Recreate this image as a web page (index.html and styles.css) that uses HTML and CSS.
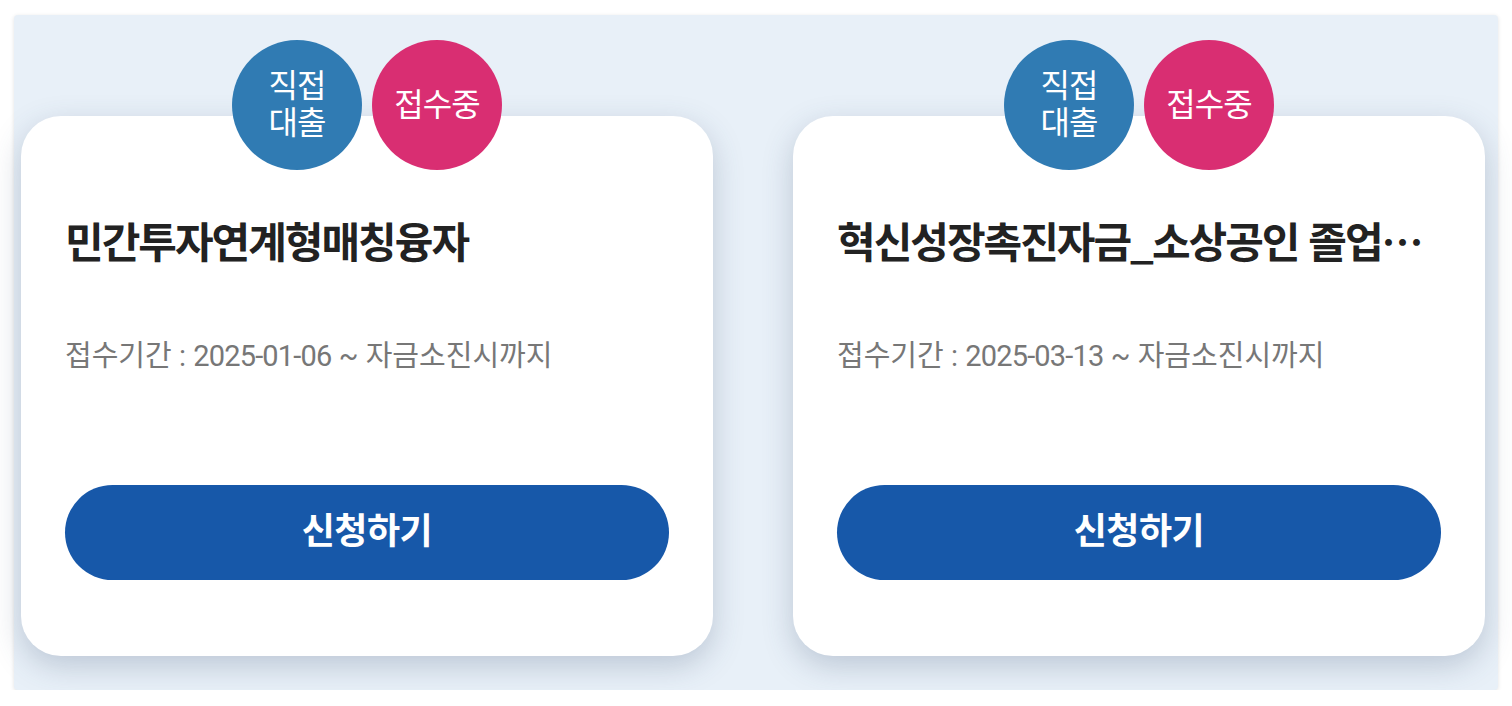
FILE: index.html
```html
<!DOCTYPE html>
<html lang="ko">
<head>
    <meta charset="UTF-8">
    <meta name="viewport" content="width=device-width, initial-scale=1.0">
    <title>정책자금 목록</title>
    <link rel="stylesheet" href="styles.css">
</head>
<body>
    <div class="panel">
        <div class="card-list">

            <div class="card">
                <div class="badges">
                    <span class="badge badge-type">직접<br>대출</span>
                    <span class="badge badge-status">접수중</span>
                </div>
                <div class="card-title">민간투자연계형매칭융자</div>
                <div class="card-period">접수기간 : <span class="date">2025-01-06</span> ~ 자금소진시까지</div>
                <a href="#" class="btn-apply">신청하기</a>
            </div>

            <div class="card">
                <div class="badges">
                    <span class="badge badge-type">직접<br>대출</span>
                    <span class="badge badge-status">접수중</span>
                </div>
                <div class="card-title">혁신성장촉진자금_소상공인 졸업기업 전용자금</div>
                <div class="card-period">접수기간 : <span class="date">2025-03-13</span> ~ 자금소진시까지</div>
                <a href="#" class="btn-apply">신청하기</a>
            </div>

        </div>
    </div>
</body>
</html>
```

FILE: styles.css
```css
body {
    font-family: Roboto, "Noto Sans CJK KR", sans-serif;
    margin: 0;
    padding: 0;
    background: #ffffff;
    color: #222222;
}

.panel {
    margin: 15px 14px 0 14px;
    height: 675px;
    box-sizing: border-box;
    padding: 101px 13px 0 7px;
    background: #e8f0f8;
    border-radius: 4px;
    box-shadow: 0 1px 4px rgba(0,0,0,0.12);
}

.card-list {
    display: grid;
    grid-template-columns: 692px 692px;
    gap: 80px;
}

.card {
    position: relative;
    height: 540px;
    box-sizing: border-box;
    padding: 94px 44px 0 44px;
    background: #ffffff;
    border-radius: 40px;
    box-shadow: 0 10px 30px rgba(60, 80, 110, 0.25);
}

/* 원형 뱃지 (카드 위에 겹침) */
.badges {
    position: absolute;
    top: -76px;
    left: 0;
    right: 0;
    display: flex;
    justify-content: center;
    gap: 10px;
}

.badge {
    width: 130px;
    height: 130px;
    box-sizing: border-box;
    padding-bottom: 6px;
    border-radius: 50%;
    display: flex;
    align-items: center;
    justify-content: center;
    text-align: center;
    color: #ffffff;
    font-family: "Noto Sans CJK KR", sans-serif;
    font-size: 32px;
    line-height: 37px;
    letter-spacing: -1px;
}

.badge-type {
    background: #307bb3;
}

.badge-status {
    background: #d92e72;
}

.card-title {
    font-family: "Noto Sans CJK KR", sans-serif;
    font-size: 42px;
    line-height: 60px;
    font-weight: bold;
    letter-spacing: -2px;
    color: #222222;
    white-space: nowrap;
    overflow: hidden;
    text-overflow: ellipsis;
    margin-bottom: 66px;
}

.card-period {
    font-size: 29px;
    line-height: 40px;
    color: #777777;
    letter-spacing: 0;
}

.card-period .date {
    letter-spacing: -0.8px;
}

.btn-apply {
    display: block;
    margin-top: 109px;
    height: 95px;
    line-height: 95px;
    border-radius: 48px;
    background: #1758a9;
    color: #ffffff;
    text-align: center;
    text-decoration: none;
    font-size: 36px;
    font-weight: bold;
    letter-spacing: -0.5px;
}
```
